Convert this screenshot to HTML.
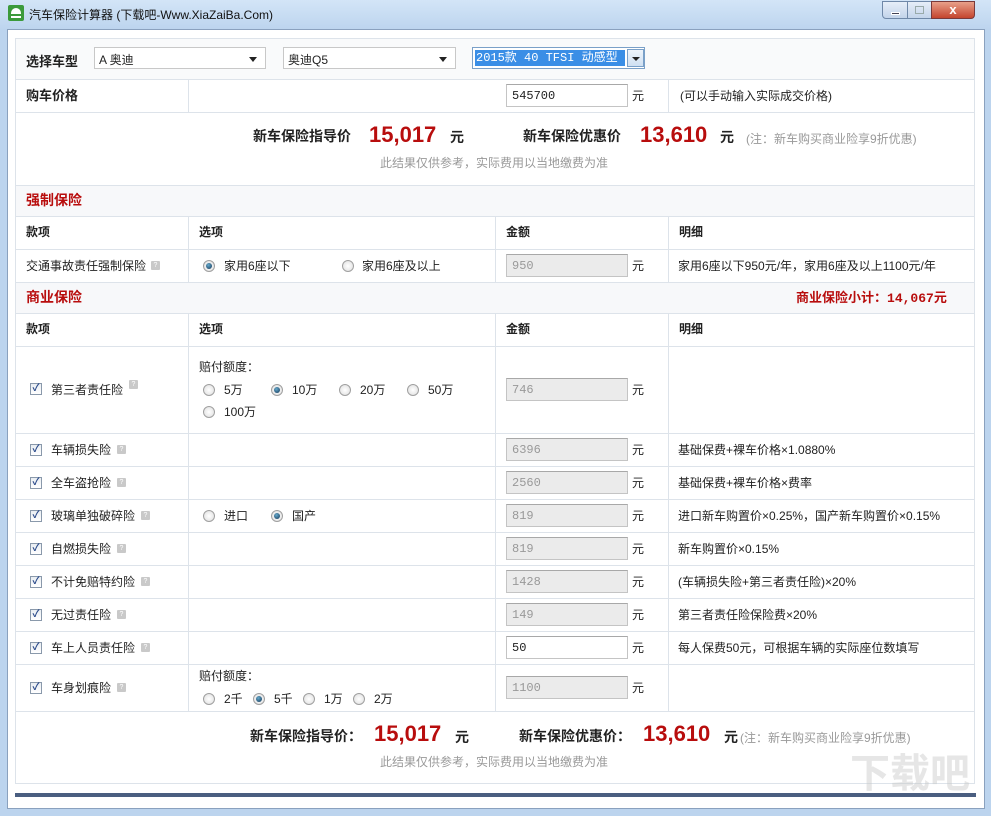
<!DOCTYPE html>
<html><head><meta charset="utf-8"><style>
*{margin:0;padding:0;box-sizing:border-box}
body{width:991px;height:816px;overflow:hidden;background:#bcd4ee;font-family:"Liberation Sans","Noto Sans CJK SC",sans-serif;font-size:12px;color:#222;position:relative}
.a{position:absolute}
.t{position:absolute;white-space:nowrap;line-height:14px}
.hl{position:absolute;height:1px;background:#dde3ea}
.vl{position:absolute;width:1px;background:#dde3ea}
.b{font-weight:bold}
.red{color:#b80d0d}
.inp{position:absolute;left:506px;width:122px;height:23px;background:#ebebeb;border:1px solid #c4c4c4;border-top-color:#a8a8a8;color:#999;font-family:"Liberation Mono",monospace;font-size:12px;padding:4px 0 0 5px}
.cb{position:absolute;width:12px;height:12px;border:1px solid #8a99ab;background:linear-gradient(#e9edf2,#fff);font-size:10px;line-height:10px;text-align:center;color:#2a4a8a;font-weight:bold}
.q{position:absolute;width:9px;height:9px;background:#c9c9c9;border-radius:1px;font-size:7px;color:#fff;line-height:9px;text-align:center}
.r{position:absolute;width:12px;height:12px;border-radius:50%;border:1px solid #a0a0a0;background:radial-gradient(#fff,#ddd)}
.r.on::after{content:"";position:absolute;left:2px;top:2px;width:6px;height:6px;border-radius:50%;background:radial-gradient(circle at 40% 35%,#6ac,#135)}
.sec{position:absolute;left:16px;width:958px;background:#f7f8fa}
.sel{position:absolute;top:47px;height:22px;border:1px solid #c8c8c8;background:#fff;padding:3px 0 0 4px;font-size:12px}
.sel::after{content:"";position:absolute;right:8px;top:9px;border:4px solid transparent;border-top:5px solid #222}
</style></head><body>
<div class="a" style="left:0;top:0;width:991px;height:30px;background:linear-gradient(#d3e5f7,#bcd4ee)"></div>
<div class="a" style="left:8px;top:5px;width:16px;height:16px;background:#3b9a3b;border-radius:2px"><div class="a" style="left:3px;top:3px;width:10px;height:6px;background:#fff;border-radius:5px 5px 0 0"></div><div class="a" style="left:3px;top:11px;width:10px;height:2px;background:#fff"></div></div>
<div class="t" style="left:29px;top:8px;font-size:12px;color:#111">汽车保险计算器 (下载吧-Www.XiaZaiBa.Com)</div>
<div class="a" style="left:882px;top:1px;width:26px;height:18px;border:1px solid #6f88a8;border-radius:0 0 0 4px;background:linear-gradient(#e6eef8,#c3d4ea)"><div class="a" style="left:8px;top:10px;width:9px;height:3px;background:#445;border:1px solid #fff"></div></div>
<div class="a" style="left:907px;top:1px;width:25px;height:18px;border:1px solid #6f88a8;background:linear-gradient(#e6eef8,#c3d4ea)"><div class="a" style="left:7px;top:4px;width:9px;height:8px;border:1px solid #9aa"></div></div>
<div class="a" style="left:931px;top:1px;width:44px;height:18px;border:1px solid #7a3a3a;border-radius:0 0 4px 0;background:linear-gradient(#e8a08a,#c4452e);color:#fff;font-weight:bold;font-size:13px;text-align:center;line-height:16px">x</div>
<div class="a" style="left:7px;top:29px;width:978px;height:780px;background:#fff;border:1px solid #8aa1be"></div>
<div class="a" style="left:15px;top:38px;width:960px;height:746px;border:1px solid #dde3ea;background:#fff"></div>
<div class="sec" style="top:39px;height:40px;background:#f9fafb"></div>
<div class="t b" style="left:26px;top:55px;font-size:13px">选择车型</div>
<div class="sel" style="left:94px;width:172px">A 奥迪</div>
<div class="sel" style="left:283px;width:173px">奥迪Q5</div>
<div class="a" style="left:472px;top:47px;width:173px;height:22px;border:1px solid #7aa0c8;background:#fff"></div>
<div class="a" style="left:475px;top:50px;width:150px;height:16px;background:#3a8ee6;color:#fff;font-family:'Liberation Mono','Noto Sans CJK SC',monospace;font-size:12px;line-height:16px;padding-left:1px">2015款 40 TFSI 动感型</div>
<div class="a" style="left:627px;top:49px;width:17px;height:18px;border:1px solid #7aa0c8;background:linear-gradient(#eef4fb,#cfe0f2)"><div class="a" style="left:4px;top:7px;border:4px solid transparent;border-top:4px solid #222"></div></div>
<div class="hl" style="left:16px;top:79px;width:958px"></div>
<div class="t b" style="left:26px;top:89px;font-size:13px">购车价格</div>
<div class="vl" style="left:188px;top:79px;height:33px"></div>
<div class="vl" style="left:668px;top:79px;height:33px"></div>
<div class="inp" style="top:84px;background:#fff;color:#222">545700</div>
<div class="t" style="left:632px;top:89px">元</div>
<div class="t" style="left:680px;top:89px">(可以手动输入实际成交价格)</div>
<div class="hl" style="left:16px;top:112px;width:958px"></div>
<div class="t b" style="left:253px;top:129px;font-size:14px">新车保险指导价</div>
<div class="t b red" style="left:369px;top:123px;font-size:22px;line-height:24px">15,017</div>
<div class="t b" style="left:450px;top:130px;font-size:14px">元</div>
<div class="t b" style="left:523px;top:129px;font-size:14px">新车保险优惠价</div>
<div class="t b red" style="left:640px;top:123px;font-size:22px;line-height:24px">13,610</div>
<div class="t b" style="left:720px;top:130px;font-size:14px">元</div>
<div class="t" style="left:746px;top:132px;color:#999">(注：新车购买商业险享9折优惠)</div>
<div class="t" style="left:380px;top:156px;color:#999">此结果仅供参考，实际费用以当地缴费为准</div>
<div class="hl" style="left:16px;top:185px;width:958px"></div>
<div class="sec" style="top:186px;height:30px"></div>
<div class="t b red" style="left:26px;top:193px;font-size:14px">强制保险</div>
<div class="hl" style="left:16px;top:216px;width:958px"></div>
<div class="t b" style="left:26px;top:225px">款项</div><div class="t b" style="left:199px;top:225px">选项</div><div class="t b" style="left:506px;top:225px">金额</div><div class="t b" style="left:679px;top:225px">明细</div>
<div class="vl" style="left:188px;top:216px;height:66px"></div><div class="vl" style="left:495px;top:216px;height:66px"></div><div class="vl" style="left:668px;top:216px;height:66px"></div>
<div class="hl" style="left:16px;top:249px;width:958px"></div>
<div class="t" style="left:26px;top:259px">交通事故责任强制保险</div><div class="q" style="left:151px;top:261px">?</div>
<div class="r on" style="left:203px;top:260px"></div><div class="t" style="left:224px;top:259px">家用6座以下</div>
<div class="r" style="left:342px;top:260px"></div><div class="t" style="left:362px;top:259px">家用6座及以上</div>
<div class="inp" style="top:254px">950</div><div class="t" style="left:632px;top:259px">元</div>
<div class="t" style="left:678px;top:259px">家用6座以下950元/年，家用6座及以上1100元/年</div>
<div class="hl" style="left:16px;top:282px;width:958px"></div>
<div class="sec" style="top:283px;height:30px"></div>
<div class="t b red" style="left:26px;top:290px;font-size:14px">商业保险</div>
<div class="t b red" style="left:796px;top:291px;font-size:13px">商业保险小计：<span style="font-family:'Liberation Mono',monospace">14,067</span>元</div>
<div class="hl" style="left:16px;top:313px;width:958px"></div>
<div class="t b" style="left:26px;top:322px">款项</div><div class="t b" style="left:199px;top:322px">选项</div><div class="t b" style="left:506px;top:322px">金额</div><div class="t b" style="left:679px;top:322px">明细</div>
<div class="vl" style="left:188px;top:313px;height:398px"></div><div class="vl" style="left:495px;top:313px;height:398px"></div><div class="vl" style="left:668px;top:313px;height:398px"></div>
<div class="hl" style="left:16px;top:346px;width:958px"></div>
<div class="cb" style="left:30px;top:383px">✓</div><div class="t" style="left:51px;top:383px">第三者责任险</div><div class="q" style="left:129px;top:380px">?</div>
<div class="t" style="left:199px;top:360px">赔付额度：</div>
<div class="r" style="left:203px;top:384px"></div><div class="t" style="left:224px;top:383px">5万</div>
<div class="r on" style="left:271px;top:384px"></div><div class="t" style="left:292px;top:383px">10万</div>
<div class="r" style="left:339px;top:384px"></div><div class="t" style="left:360px;top:383px">20万</div>
<div class="r" style="left:407px;top:384px"></div><div class="t" style="left:428px;top:383px">50万</div>
<div class="r" style="left:203px;top:406px"></div><div class="t" style="left:224px;top:405px">100万</div>
<div class="inp" style="top:378px">746</div><div class="t" style="left:632px;top:383px">元</div>
<div class="hl" style="left:16px;top:433px;width:958px"></div>
<div class="cb" style="left:30px;top:444px">✓</div><div class="t" style="left:51px;top:443px">车辆损失险</div><div class="q" style="left:117px;top:445px">?</div>
<div class="inp" style="top:438px">6396</div><div class="t" style="left:632px;top:443px">元</div><div class="t" style="left:678px;top:443px">基础保费+裸车价格×1.0880%</div>
<div class="hl" style="left:16px;top:466px;width:958px"></div>
<div class="cb" style="left:30px;top:477px">✓</div><div class="t" style="left:51px;top:476px">全车盗抢险</div><div class="q" style="left:117px;top:478px">?</div>
<div class="inp" style="top:471px">2560</div><div class="t" style="left:632px;top:476px">元</div><div class="t" style="left:678px;top:476px">基础保费+裸车价格×费率</div>
<div class="hl" style="left:16px;top:499px;width:958px"></div>
<div class="cb" style="left:30px;top:510px">✓</div><div class="t" style="left:51px;top:509px">玻璃单独破碎险</div><div class="q" style="left:141px;top:511px">?</div>
<div class="r" style="left:203px;top:510px"></div><div class="t" style="left:224px;top:509px">进口</div>
<div class="r on" style="left:271px;top:510px"></div><div class="t" style="left:292px;top:509px">国产</div>
<div class="inp" style="top:504px">819</div><div class="t" style="left:632px;top:509px">元</div><div class="t" style="left:678px;top:509px">进口新车购置价×0.25%，国产新车购置价×0.15%</div>
<div class="hl" style="left:16px;top:532px;width:958px"></div>
<div class="cb" style="left:30px;top:543px">✓</div><div class="t" style="left:51px;top:542px">自燃损失险</div><div class="q" style="left:117px;top:544px">?</div>
<div class="inp" style="top:537px">819</div><div class="t" style="left:632px;top:542px">元</div><div class="t" style="left:678px;top:542px">新车购置价×0.15%</div>
<div class="hl" style="left:16px;top:565px;width:958px"></div>
<div class="cb" style="left:30px;top:576px">✓</div><div class="t" style="left:51px;top:575px">不计免赔特约险</div><div class="q" style="left:141px;top:577px">?</div>
<div class="inp" style="top:570px">1428</div><div class="t" style="left:632px;top:575px">元</div><div class="t" style="left:678px;top:575px">(车辆损失险+第三者责任险)×20%</div>
<div class="hl" style="left:16px;top:598px;width:958px"></div>
<div class="cb" style="left:30px;top:609px">✓</div><div class="t" style="left:51px;top:608px">无过责任险</div><div class="q" style="left:117px;top:610px">?</div>
<div class="inp" style="top:603px">149</div><div class="t" style="left:632px;top:608px">元</div><div class="t" style="left:678px;top:608px">第三者责任险保险费×20%</div>
<div class="hl" style="left:16px;top:631px;width:958px"></div>
<div class="cb" style="left:30px;top:642px">✓</div><div class="t" style="left:51px;top:641px">车上人员责任险</div><div class="q" style="left:141px;top:643px">?</div>
<div class="inp" style="top:636px;background:#fff;color:#222">50</div><div class="t" style="left:632px;top:641px">元</div><div class="t" style="left:678px;top:641px">每人保费50元，可根据车辆的实际座位数填写</div>
<div class="hl" style="left:16px;top:664px;width:958px"></div>
<div class="cb" style="left:30px;top:682px">✓</div><div class="t" style="left:51px;top:681px">车身划痕险</div><div class="q" style="left:117px;top:683px">?</div>
<div class="t" style="left:199px;top:669px">赔付额度：</div>
<div class="r" style="left:203px;top:693px"></div><div class="t" style="left:224px;top:692px">2千</div>
<div class="r on" style="left:253px;top:693px"></div><div class="t" style="left:274px;top:692px">5千</div>
<div class="r" style="left:303px;top:693px"></div><div class="t" style="left:324px;top:692px">1万</div>
<div class="r" style="left:353px;top:693px"></div><div class="t" style="left:374px;top:692px">2万</div>
<div class="inp" style="top:676px">1100</div><div class="t" style="left:632px;top:681px">元</div>
<div class="hl" style="left:16px;top:711px;width:958px"></div>
<div class="t b" style="left:250px;top:729px;font-size:14px">新车保险指导价：</div>
<div class="t b red" style="left:374px;top:722px;font-size:22px;line-height:24px">15,017</div>
<div class="t b" style="left:455px;top:730px;font-size:14px">元</div>
<div class="t b" style="left:519px;top:729px;font-size:14px">新车保险优惠价：</div>
<div class="t b red" style="left:643px;top:722px;font-size:22px;line-height:24px">13,610</div>
<div class="t b" style="left:724px;top:730px;font-size:14px">元</div>
<div class="t" style="left:740px;top:731px;color:#999">(注：新车购买商业险享9折优惠)</div>
<div class="t" style="left:380px;top:755px;color:#999">此结果仅供参考，实际费用以当地缴费为准</div>
<div class="a" style="left:15px;top:793px;width:961px;height:4px;background:#4a5e80"></div>
<div class="t b" style="left:850px;top:752px;font-size:40px;line-height:44px;color:rgba(200,200,200,.45)">下载吧</div>
</body></html>
